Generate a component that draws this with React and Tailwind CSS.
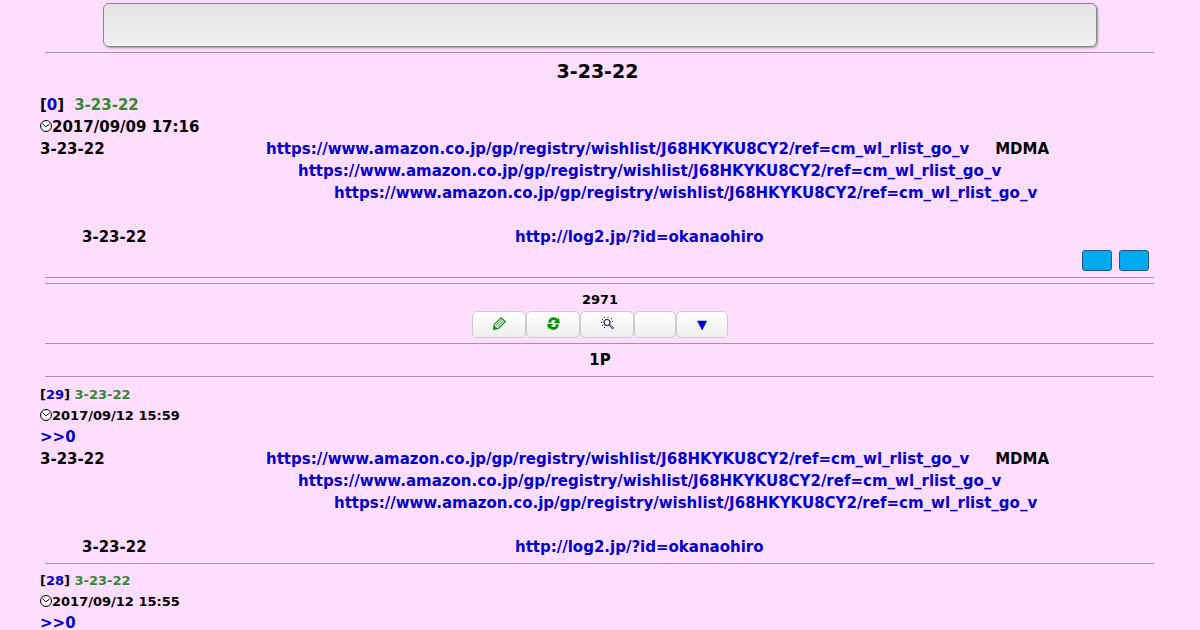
import React from "react";

const WISHLIST =
  "https://www.amazon.co.jp/gp/registry/wishlist/J68HKYKU8CY2/ref=cm_wl_rlist_go_v";
const LOG = "http://log2.jp/?id=okanaohiro";

const replies = [
  { id: 29, name: "3-23-22", date: "2017/09/12 15:59", full: true },
  { id: 28, name: "3-23-22", date: "2017/09/12 15:55", full: false },
];

function Rule({ className = "" }) {
  return <hr className={`ml-[5px] mr-[6px] border-t border-[#a98fa9] ${className}`} />;
}

function ClockIcon() {
  return (
    <svg viewBox="0 0 12 12" className="mb-[2px] h-3 w-3 shrink-0" fill="none" aria-hidden="true">
      <circle cx="6" cy="6" r="5.5" fill="#fff" stroke="#000" strokeWidth="1" />
      <path d="M2.6 3.6 5.8 6.8 9.6 4" stroke="#000" strokeWidth="1" />
      <path d="M6 1.4v1M6 9.6v1M1.4 6h1M9.6 6h1" stroke="#888" strokeWidth="0.8" />
    </svg>
  );
}

function PencilIcon() {
  return (
    <svg viewBox="0 0 13 13" className="mb-[3px] h-[13px] w-[13px]" fill="none" stroke="#158a15" aria-hidden="true">
      <path d="M1.2 7.4 8.2 0.8 12.3 4.6 5.4 11.4 0.8 12.2Z" fill="#fff" strokeWidth="1.1" />
      <path d="M3 8.4 9.4 2.4M4.4 9.8 10.8 3.8" strokeWidth="0.9" />
      <path d="M0.8 12.4 1.1 8.6 4.4 11.7Z" fill="#158a15" strokeWidth="0.6" />
    </svg>
  );
}

function ReloadIcon() {
  return (
    <svg viewBox="0 0 12 12" className="mb-[3px] h-[13px] w-[13px]" fill="#0a900a" aria-hidden="true">
      <path d="M1.2 5.4C1.2 2.2 3.2 0.2 6 0.2c1.8 0 3.2.8 4 2.2V1.2h.8L12 5.6H6.2L8 3.8C7.600 3 7 2.700 6 2.700c-1.400 0-2.100 1-2.200 2.700z" />
      <path d="M10.800 6.600C10.800 9.800 8.800 11.800 6 11.800c-1.800 0-3.200-.8-4-2.200v1.200h-.8L0 6.400h5.800L4 8.200c.4.8 1 1.100 2 1.100 1.400 0 2.100-1 2.200-2.700z" />
    </svg>
  );
}

function SearchIcon() {
  return (
    <svg viewBox="0 0 13 13" className="mb-[3px] h-[13px] w-[13px]" fill="none" stroke="#14147a" aria-hidden="true">
      <circle cx="6" cy="5.500" r="3" fill="#fff" strokeWidth="1.1" />
      <path d="M8 8.200 11.500 12M9.200 7.600 12.600 11.200M11.500 12 12.600 11.200" strokeWidth="0.9" />
      <path
        d="M1 2.500h1M3 0.500h1M6.500 0.500h1M10 1.500h1M0 5.500h1M1 8.500h1M3 10.500h1M11 4.500h1"
        strokeWidth="1"
      />
    </svg>
  );
}

function NavButton({ className, label, children }) {
  return (
    <button
      type="button"
      aria-label={label}
      className={`flex h-[27px] items-center justify-center rounded-[5px] border border-[#ccc] bg-linear-to-b from-white to-[#eee] ${className}`}
    >
      {children}
    </button>
  );
}

function Message() {
  return (
    <div>
      <p className="flex">
        <span className="w-[226px]">3-23-22</span>
        <a href={WISHLIST} className="text-[#0000cc]">{WISHLIST}</a>
        <span className="ml-[26px]">MDMA</span>
      </p>
      <p className="pl-[258px]">
        <a href={WISHLIST} className="text-[#0000cc]">{WISHLIST}</a>
      </p>
      <p className="pl-[294px]">
        <a href={WISHLIST} className="text-[#0000cc]">{WISHLIST}</a>
      </p>
      <p className="flex pt-[22px] pl-[42px]">
        <span className="w-[433px]">3-23-22</span>
        <a href={LOG} className="text-[#0000cc]">{LOG}</a>
      </p>
    </div>
  );
}

function Reply({ post }) {
  return (
    <article>
      <div className="text-[13px] leading-[21px]">
        <p>
          [<a href={`#${post.id}`} className="text-[#0000cc]">{post.id}</a>]{" "}
          <span className="text-[#338833]">{post.name}</span>
        </p>
        <p className="flex items-center">
          <ClockIcon />
          {post.date}
        </p>
      </div>
      <p>
        <a href="#0" className="text-[#0000cc]">&gt;&gt;0</a>
      </p>
      {post.full && <Message />}
    </article>
  );
}

export default function App() {
  return (
    <main className="min-h-screen bg-[#ffddff] px-10 pt-[3px] font-['DejaVu_Sans',sans-serif] text-[15px] leading-[22px] font-bold text-black">
      <div className="mx-[63px] h-11 rounded-md border border-[#888] bg-linear-to-b from-[#e4e4e4] to-[#f0f0f0] shadow-[1px_1px_2px_#999]" />
      <Rule className="mt-[5px]" />
      <h1 className="pt-[7px] pr-[5px] text-center text-[19px]">3-23-22</h1>

      <article id="0" className="pt-3">
        <p>
          [<a href="#0" className="text-[#0000cc]">0</a>]
          <span className="ml-[10px] text-[#338833]">3-23-22</span>
        </p>
        <p className="flex items-center">
          <ClockIcon />
          2017/09/09 17:16
        </p>
        <Message />
        <div className="flex justify-end gap-[7px] pt-[2px] pr-[11px]">
          <button type="button" aria-label="Quote" className="h-[21px] w-[30px] rounded-[3px] border border-[#225588] bg-[#00aaee]" />
          <button type="button" aria-label="Reply" className="h-[21px] w-[30px] rounded-[3px] border border-[#225588] bg-[#00aaee]" />
        </div>
      </article>

      <Rule className="mt-[6px]" />
      <Rule className="mt-[5px]" />
      <p className="pt-[5px] text-center text-[13px]">2971</p>
      <nav className="flex justify-center">
        <NavButton className="w-[54px]" label="Write"><PencilIcon /></NavButton>
        <NavButton className="w-[54px]" label="Reload"><ReloadIcon /></NavButton>
        <NavButton className="w-[54px]" label="Search"><SearchIcon /></NavButton>
        <NavButton className="w-[42px]" label="List" />
        <NavButton className="w-[52px] text-[13px] text-[#0000cc]" label="Down">▼</NavButton>
      </nav>
      <Rule className="mt-[5px]" />
      <p className="py-[5px] text-center">1P</p>
      <Rule />

      <section className="pt-[7px]">
        {replies.map((post, i) => (
          <React.Fragment key={post.id}>
            {i > 0 && <Rule className="mt-[5px] mb-[6px]" />}
            <Reply post={post} />
          </React.Fragment>
        ))}
      </section>
    </main>
  );
}
